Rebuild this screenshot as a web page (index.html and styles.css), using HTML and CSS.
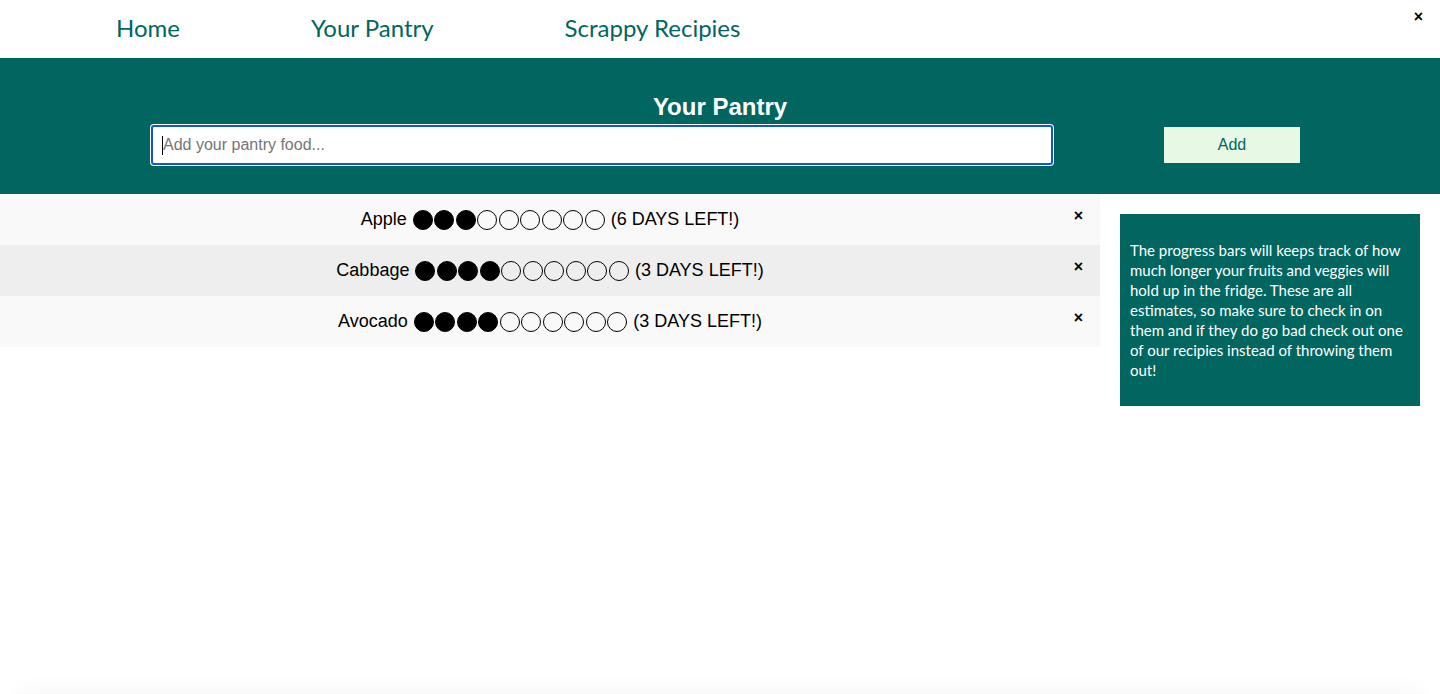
FILE: index.html
```html
<!DOCTYPE html>
<html lang="en">
<head>
  <meta charset="UTF-8">
  <title>Your Pantry</title>
  <link rel="stylesheet" href="styles.css">
</head>
<body>
  <div class="page">
    <nav class="topnav">
      <a href="#">Home</a>
      <a href="#">Your Pantry</a>
      <a href="#">Scrappy Recipies</a>
      <span class="close-top">&times;</span>
    </nav>

    <div class="header">
      <h2>Your Pantry</h2>
      <div class="add-row">
        <input type="text" class="pantry-input focused" placeholder="Add your pantry food...">
        <span class="caret"></span>
        <button class="add-btn">Add</button>
      </div>
    </div>

    <div class="content">
      <ul class="pantry-list">
        <li>
          <span></span>
          <span class="item">Apple <span class="dots"><i class="on"></i><i class="on"></i><i class="on"></i><i></i><i></i><i></i><i></i><i></i><i></i></span> (6 DAYS LEFT!)</span>
          <span class="close">&times;</span>
        </li>
        <li>
          <span></span>
          <span class="item">Cabbage <span class="dots"><i class="on"></i><i class="on"></i><i class="on"></i><i class="on"></i><i></i><i></i><i></i><i></i><i></i><i></i></span> (3 DAYS LEFT!)</span>
          <span class="close">&times;</span>
        </li>
        <li>
          <span></span>
          <span class="item">Avocado <span class="dots"><i class="on"></i><i class="on"></i><i class="on"></i><i class="on"></i><i></i><i></i><i></i><i></i><i></i><i></i></span> (3 DAYS LEFT!)</span>
          <span class="close">&times;</span>
        </li>
      </ul>

      <div class="info">
        <p>The progress bars will keeps track of how much longer your fruits and veggies will hold up in the fridge. These are all estimates, so make sure to check in on them and if they do go bad check out one of our recipies instead of throwing them out!</p>
      </div>
    </div>
  </div>
  <div class="footer"></div>
</body>
</html>
```

FILE: styles.css
```css
body { margin: 0; font-family: "Liberation Sans", Arial, sans-serif; background: #fff; }
.page { min-height: 100vh; }

.topnav { display: flex; align-items: center; height: 58px; padding-left: 116px; gap: 131px; position: relative; }
.topnav a { font-family: Lato, sans-serif; font-size: 24px; line-height: 28px; margin-top: -2px; color: #00665f; text-decoration: none; }
.close-top { position: absolute; right: 17px; top: 8px; font-size: 16px; font-weight: bold; }

.header { background: #00665f; padding: 35px 0 29px; }
.header h2 { margin: 0; text-align: center; color: #fff; font-size: 24px; line-height: 28px; }
.add-row { display: flex; align-items: center; margin-top: 4px; position: relative; }
.pantry-input { width: 902px; height: 40px; box-sizing: border-box; margin-left: 151px; padding: 0 10px; font-family: "Liberation Sans", Arial, sans-serif; font-size: 16px; border: 1px solid #767676; border-radius: 3px; outline: none; }
.pantry-input::placeholder { color: #757575; }
.pantry-input.focused { border: 2px solid #1257d0; box-shadow: 0 0 0 1px #fff; }
.caret { position: absolute; left: 162px; top: 11px; width: 1px; height: 19px; background: #000; }
.add-btn { margin-left: 111px; width: 136px; height: 36px; border: none; background: #e7f8e4; color: #00665f; font-family: "Liberation Sans", Arial, sans-serif; font-size: 16px; }

.content { display: flex; align-items: flex-start; }
.pantry-list { list-style: none; margin: 0; padding: 0; width: 1100px; }
.pantry-list li { display: grid; grid-template-columns: 1fr auto 1fr; align-items: center; height: 51px; background: #f9f9f9; font-size: 18px; }
.pantry-list li:nth-child(2) { background: #eeeeee; }
.item { display: flex; align-items: center; white-space: pre; }
.dots { display: inline-flex; gap: 1.5px; margin: 0 1px; }
.dots i { width: 20px; height: 20px; box-sizing: border-box; border: 1px solid #000; border-radius: 50%; }
.dots i.on { background: #000; }
.close { justify-self: end; padding-right: 17px; font-size: 16px; font-weight: bold; margin-top: -8px; }

.info { background: #00665f; width: 300px; box-sizing: border-box; margin: 20px 0 0 20px; padding: 10px; color: #fff; }
.info p { margin: 16px 0; font-family: Lato, sans-serif; font-size: 15px; line-height: 20px; }

.footer { height: 20px; margin: 0 16px; box-shadow: 0 0 24px rgba(0,0,0,0.05); }
```
